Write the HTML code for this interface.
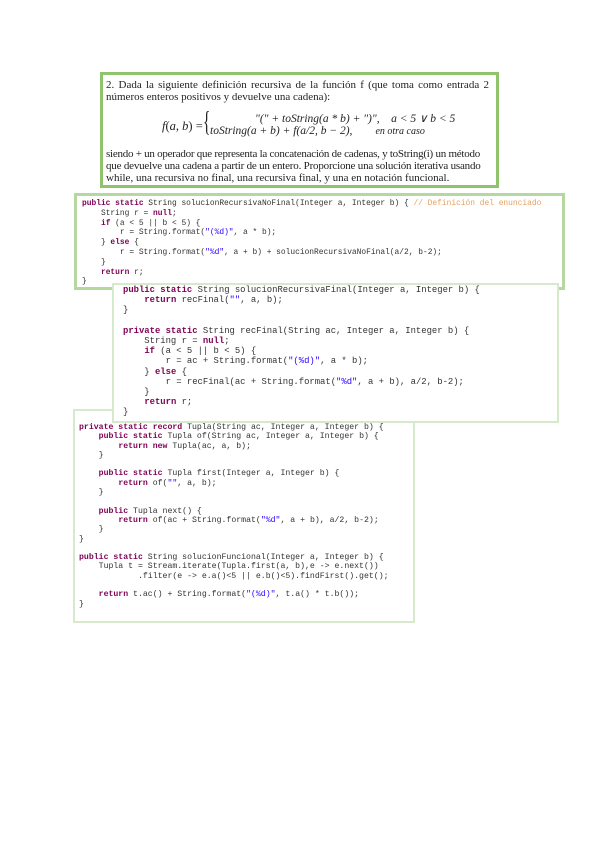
<!DOCTYPE html>
<html><head><meta charset="utf-8"><style>
body{margin:0;width:600px;height:848px;background:#fff;position:relative;overflow:hidden}
.box{position:absolute;background:#fff;box-sizing:border-box}
.t{font-family:"Liberation Serif",serif;color:#222;position:absolute;white-space:nowrap}
pre{margin:0;position:absolute;font-family:"Liberation Mono",monospace;color:#333;white-space:pre}
.k{color:#7f0055;font-weight:bold}
.s{color:#2a00ff}
.c{color:#e8a060}
.i{font-style:italic}
</style></head><body>

<div class="box" style="left:100px;top:72px;width:399px;height:116px;border:3px solid #8fc46c"></div>
<div class="t" style="left:106px;top:79px;font-size:11px;word-spacing:1.5px">2. Dada la siguiente definición recursiva de la función f (que toma como entrada 2</div>
<div class="t" style="left:106px;top:91px;font-size:11px">números enteros positivos y devuelve una cadena):</div>
<div class="t" style="left:162px;top:119px;font-size:12.5px"><span class="i">f</span>(<span class="i">a</span>, <span class="i">b</span>) =</div>
<div class="t" style="left:203px;top:107px;font-size:28px;transform:scaleX(0.55);transform-origin:left">{</div>
<div class="t i" style="left:255px;top:111px;font-size:11.5px">"(" + toString(a * b) + ")",&nbsp;&nbsp;&nbsp; a &lt; 5 ∨ b &lt; 5</div>
<div class="t i" style="left:210px;top:125px;font-size:11.5px">toString(a + b) + f(a/2, b − 2),&nbsp;&nbsp;&nbsp;&nbsp;&nbsp;&nbsp;&nbsp; <span style="font-size:10px">en otra caso</span></div>
<div class="t" style="left:106px;top:148px;font-size:11px;letter-spacing:-0.25px">siendo + un operador que representa la concatenación de cadenas, y toString(i) un método</div>
<div class="t" style="left:106px;top:160px;font-size:11px;letter-spacing:-0.2px">que devuelve una cadena a partir de un entero. Proporcione una solución iterativa usando</div>
<div class="t" style="left:106px;top:172px;font-size:11px">while, una recursiva no final, una recursiva final, y una en notación funcional.</div>

<div class="box" style="left:74px;top:193px;width:491px;height:97px;border:3px solid #b5d7a0"></div>
<pre style="left:82px;top:199px;font-size:7.9px;line-height:9.8px"><span class="k">public static</span> String solucionRecursivaNoFinal(Integer a, Integer b) { <span class="c">// Definición del enunciado</span>
    String r = <span class="k">null</span>;
    <span class="k">if</span> (a &lt; 5 || b &lt; 5) {
        r = String.format(<span class="s">"(%d)"</span>, a * b);
    } <span class="k">else</span> {
        r = String.format(<span class="s">"%d"</span>, a + b) + solucionRecursivaNoFinal(a/2, b-2);
    }
    <span class="k">return</span> r;
}</pre>

<div class="box" style="left:73px;top:409px;width:342px;height:214px;border:2px solid #d6e9cc"></div>
<pre style="left:79px;top:423px;font-size:8.2px;line-height:9.3px"><span class="k">private static record</span> Tupla(String ac, Integer a, Integer b) {
    <span class="k">public static</span> Tupla of(String ac, Integer a, Integer b) {
        <span class="k">return new</span> Tupla(ac, a, b);
    }

    <span class="k">public static</span> Tupla first(Integer a, Integer b) {
        <span class="k">return</span> of(<span class="s">""</span>, a, b);
    }

    <span class="k">public</span> Tupla next() {
        <span class="k">return</span> of(ac + String.format(<span class="s">"%d"</span>, a + b), a/2, b-2);
    }
}

<span class="k">public static</span> String solucionFuncional(Integer a, Integer b) {
    Tupla t = Stream.iterate(Tupla.first(a, b),e -&gt; e.next())
            .filter(e -&gt; e.a()&lt;5 || e.b()&lt;5).findFirst().get();

    <span class="k">return</span> t.ac() + String.format(<span class="s">"(%d)"</span>, t.a() * t.b());
}</pre>

<div class="box" style="left:112px;top:283px;width:447px;height:140px;border:2px solid #d6e9cc"></div>
<pre style="left:123px;top:285px;font-size:8.9px;line-height:10.2px"><span class="k">public static</span> String solucionRecursivaFinal(Integer a, Integer b) {
    <span class="k">return</span> recFinal(<span class="s">""</span>, a, b);
}

<span class="k">private static</span> String recFinal(String ac, Integer a, Integer b) {
    String r = <span class="k">null</span>;
    <span class="k">if</span> (a &lt; 5 || b &lt; 5) {
        r = ac + String.format(<span class="s">"(%d)"</span>, a * b);
    } <span class="k">else</span> {
        r = recFinal(ac + String.format(<span class="s">"%d"</span>, a + b), a/2, b-2);
    }
    <span class="k">return</span> r;
}</pre>

</body></html>
